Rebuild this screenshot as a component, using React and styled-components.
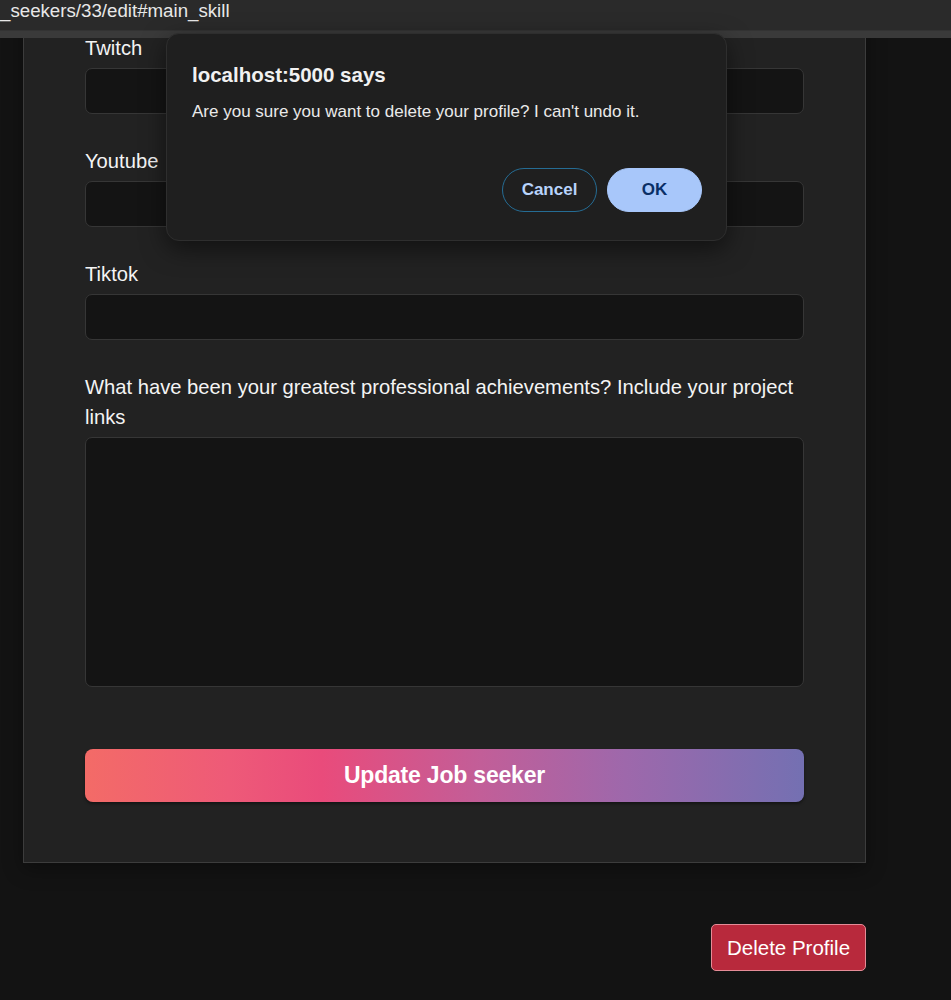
import React from "react";
import styled, { createGlobalStyle } from "styled-components";

const Global = createGlobalStyle`
  html, body { margin: 0; padding: 0; background: #131313; }
  body { font-family: "Liberation Sans", Arial, sans-serif; color: #f2f2f2; }
  * { box-sizing: border-box; }
`;

const Screen = styled.div`
  position: relative;
  width: 951px;
  height: 1000px;
  overflow: hidden;
  background: #131313;
`;

const UrlBar = styled.div`
  height: 30px;
  background: #2a2a2a;
  color: #e8e8e8;
  font-size: 18.7px;
  line-height: 22px;
  white-space: nowrap;
`;

const Strip = styled.div`
  height: 8px;
  background: #3a3a3a;
  border-top: 1px solid #333;
`;

const Viewport = styled.div`
  overflow: hidden;
  height: 962px;
`;

const Card = styled.div`
  margin: -41px 0 0 23px;
  width: 843px;
  background: #222222;
  border: 1px solid #3c3c3c;
  box-shadow: 0 6px 18px rgba(0, 0, 0, 0.35);
  padding: 35px 61px 60px 61px;
  display: flex;
  flex-direction: column;
`;

const Field = styled.div`
  display: flex;
  flex-direction: column;
  gap: 5px;
  margin-bottom: ${(p) => p.$mb || 32}px;
`;

const Label = styled.label`
  font-size: 20.2px;
  line-height: 30px;
  color: #f4f4f4;
`;

const Input = styled.div`
  height: 46px;
  background: #141414;
  border: 1px solid #363636;
  border-radius: 7px;
`;

const TextArea = styled(Input)`
  height: 250px;
`;

const UpdateButton = styled.button`
  height: 53px;
  border: none;
  border-radius: 8px;
  background: linear-gradient(90deg, #f36b67 0%, #ee5a78 20%, #e94b7b 33%, #c25e98 55%, #9e68ab 75%, #7470b2 100%);
  color: #fff;
  font-family: "Liberation Sans", Arial, sans-serif;
  font-weight: 700;
  font-size: 23px;
  letter-spacing: -0.2px;
  box-shadow: 0 2px 3px rgba(0, 0, 0, 0.4);
`;

const Footer = styled.div`
  display: flex;
  justify-content: flex-end;
  width: 843px;
  margin: 61px 0 0 23px;
`;

const DeleteButton = styled.button`
  width: 155px;
  height: 47px;
  background: #b8293c;
  border: 1px solid #e58c97;
  border-radius: 5px;
  color: #fff;
  font-family: "Liberation Sans", Arial, sans-serif;
  font-size: 20.5px;
  padding: 0;
`;

const Dialog = styled.div`
  position: absolute;
  left: 166px;
  top: 33px;
  width: 561px;
  height: 208px;
  background: #1f1f1f;
  border: 1px solid #2e2e2e;
  border-radius: 13px;
  box-shadow: 0 8px 24px rgba(0, 0, 0, 0.5);
  padding: 29px 24px 0 25px;
  display: flex;
  flex-direction: column;
`;

const DialogTitle = styled.div`
  font-family: "Liberation Sans", Arial, sans-serif;
  font-size: 20.5px;
  font-weight: 700;
  line-height: 24px;
  color: #f1f1f1;
`;

const DialogText = styled.div`
  font-family: "Liberation Sans", Arial, sans-serif;
  font-size: 17px;
  line-height: 22px;
  margin-top: 14px;
  color: #eaeaea;
`;

const DialogActions = styled.div`
  display: flex;
  justify-content: flex-end;
  gap: 10px;
  margin-top: 45px;
`;

const PillButton = styled.button`
  width: 95px;
  height: 44px;
  border-radius: 22px;
  font-family: "Liberation Sans", Arial, sans-serif;
  font-size: 17px;
  font-weight: 700;
  padding: 0;
  border: 1px solid ${(p) => (p.$primary ? "#a8c7fa" : "#256c94")};
  background: ${(p) => (p.$primary ? "#a8c7fa" : "transparent")};
  color: ${(p) => (p.$primary ? "#0a2f66" : "#b8d3fb")};
`;

const fields = ["Twitch", "Youtube", "Tiktok"];

export default function App() {
  return (
    <Screen>
      <Global />
      <UrlBar>_seekers/33/edit#main_skill</UrlBar>
      <Strip />
      <Viewport>
        <Card>
          {fields.map((f) => (
            <Field key={f}>
              <Label>{f}</Label>
              <Input />
            </Field>
          ))}
          <Field $mb={62}>
            <Label>
              What have been your greatest professional achievements? Include your project links
            </Label>
            <TextArea />
          </Field>
          <UpdateButton>Update Job seeker</UpdateButton>
        </Card>
        <Footer>
          <DeleteButton>Delete Profile</DeleteButton>
        </Footer>
      </Viewport>
      <Dialog>
        <DialogTitle>localhost:5000 says</DialogTitle>
        <DialogText>Are you sure you want to delete your profile? I can't undo it.</DialogText>
        <DialogActions>
          <PillButton>Cancel</PillButton>
          <PillButton $primary>OK</PillButton>
        </DialogActions>
      </Dialog>
    </Screen>
  );
}
